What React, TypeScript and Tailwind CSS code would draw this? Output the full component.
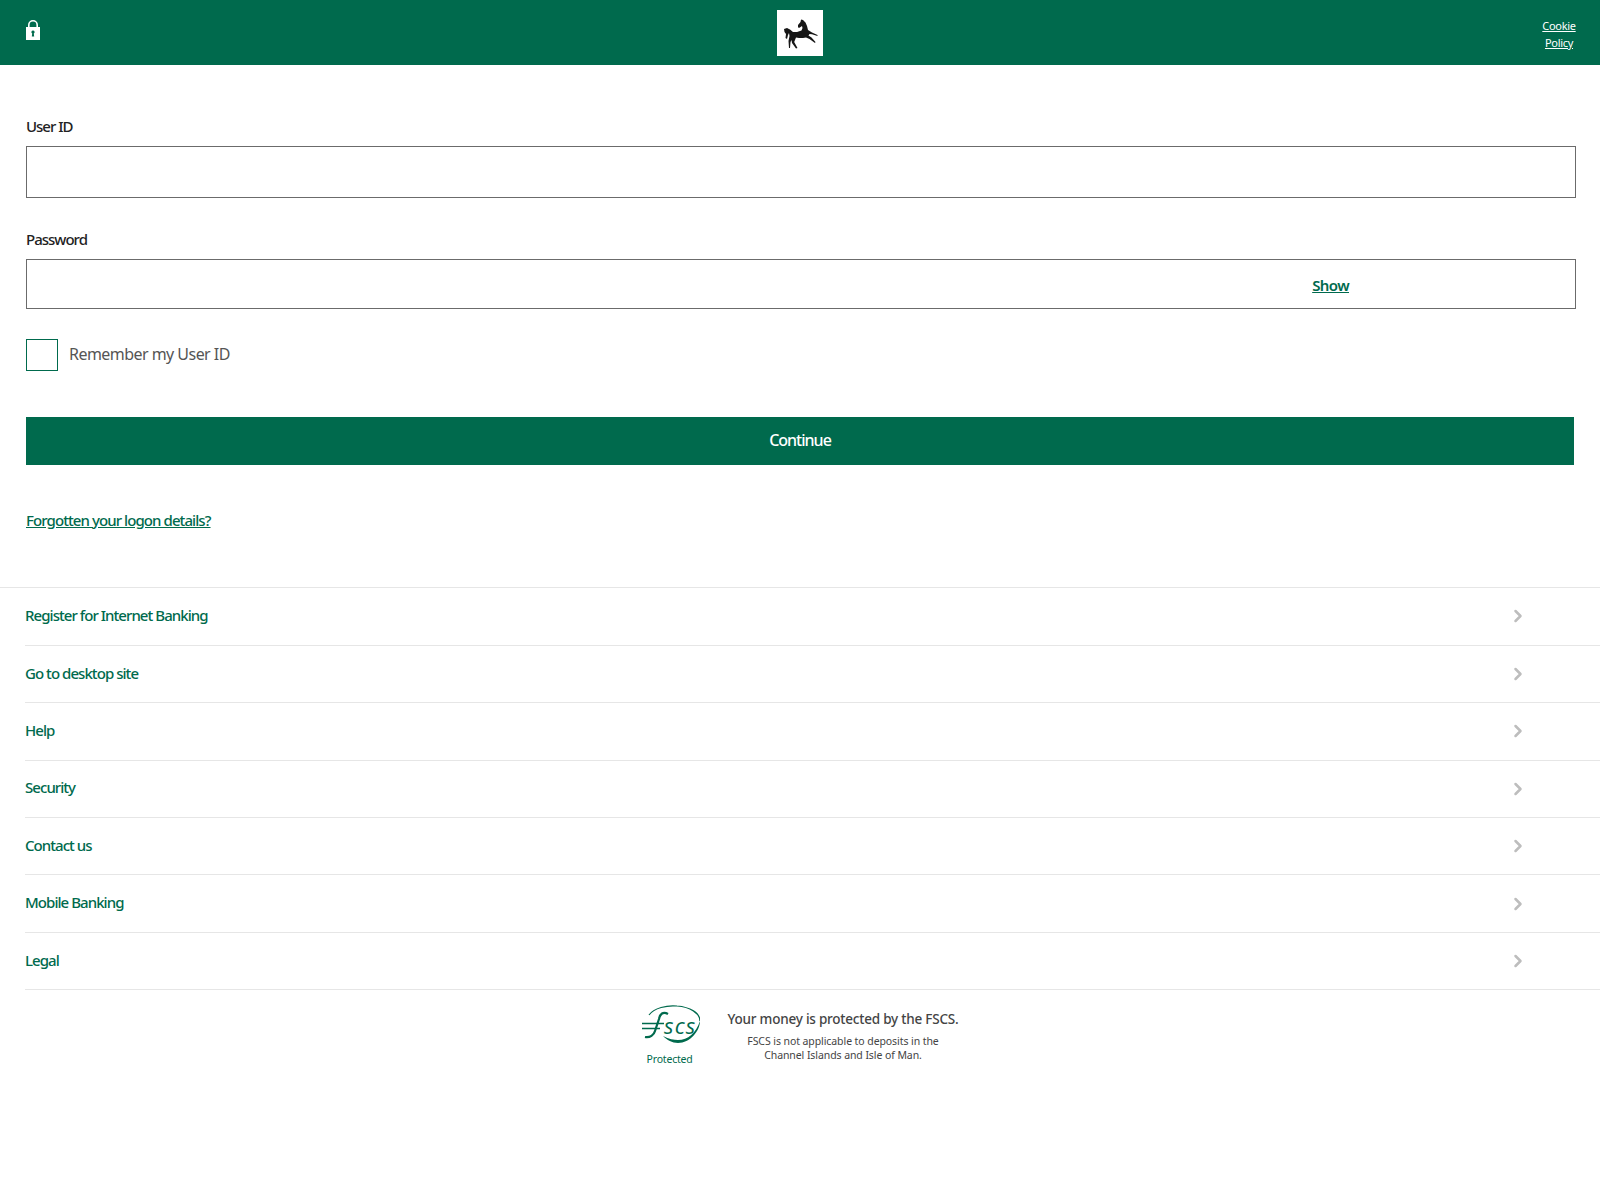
import { ChevronRight } from 'lucide-react'

const links = [
  'Register for Internet Banking',
  'Go to desktop site',
  'Help',
  'Security',
  'Contact us',
  'Mobile Banking',
  'Legal',
]

function Lock() {
  return (
    <svg viewBox="0 0 14 20" className="w-[14px] h-[20px]">
      <path d="M2.800 8V5a4.200 4.200 0 0 1 8.400 0v3" fill="none" stroke="#fff" strokeWidth="1.6" />
      <path fillRule="evenodd" fill="#fff" d="M0 7h14v13H0zM7 10.500a1.600 1.600 0 0 0-.8 3L5.800 16.500h2.400l-.4-3A1.600 1.600 0 0 0 7 10.500z" />
    </svg>
  )
}

function Horse() {
  return (
    <svg viewBox="0 0 36 36" className="w-[36px] h-[36px]">
      <path
        fill="#161616"
        d="M19 4.500L21 5L23.500 7.500L25 11L26 15L30 17.500L35.500 20L35.500 21L30 19.300L27.500 19L26.500 20.500L29.500 22.500L33.500 27L33 28L27.500 24L24 22.500L21 23L17 23L14 22.500L13 25L12.200 27L15.500 33L14 33.500L10 28L9.500 25L8.500 27L8 33L7 33L6.500 26L7.500 21L7 18L6 20L5 24L3.500 23L4 19L2.500 17L2 14L5 13L8 14.500L11 17L15 17L19.500 15.500L20.500 13L20 11L17.500 12.800L16 12.500L16 10L18.500 7z"
      />
    </svg>
  )
}

function FscsLogo() {
  return (
    <svg viewBox="-2 0 60 40" className="w-[60px] h-[40px]">
      <path d="M7 10C12 3 25 0 35 1C48 2 58 8 58 16" fill="none" stroke="#006a4d" strokeWidth="1.2" />
      <path d="M58 16C58 26 48 38 36 38C30 38 25 35 21 31C27 34 32 35 36 35C46 35 54 28 58 16z" fill="#006a4d" />
      <path d="M26 9C21 6 18 9 17 14L13 26C12 30 8 33 3 32" fill="none" stroke="#006a4d" strokeWidth="2.200" />
      <path d="M0 18.500H22M0 23.500H18" stroke="#006a4d" strokeWidth="1.600" />
      <text x="22" y="29" fontSize="22" fontWeight="500" fontStyle="italic" fill="#006a4d" fontFamily="'Open Sans', sans-serif" letterSpacing="1.200">scs</text>
    </svg>
  )
}

export default function App() {
  return (
    <div className="min-h-[1200px] bg-white font-['Noto_Sans',sans-serif] text-[#333]">
      <header className="h-[65px] bg-[#006a4d] flex items-start justify-between pl-[26px] pr-[24px]">
        <div className="w-[58px] pt-[20px]"><Lock /></div>
        <div className="mt-[10px] w-[46px] h-[46px] bg-white flex items-center justify-center"><Horse /></div>
        <a className="w-[60px] pt-[17px] flex flex-col items-end text-[11px] leading-[17px] tracking-[-0.3px] text-white underline text-center">
          <span className="w-[34px] text-center">Cookie Policy</span>
        </a>
      </header>

      <main className="pl-[26px] pr-[24px] pt-[50px]">
        <label className="block text-[15px] leading-[22px] font-medium tracking-[-1px] text-[#222]">User ID</label>
        <div className="mt-[9px] h-[52px] border border-[#6b6b6b]" />
        <label className="block mt-[30px] text-[15px] leading-[22px] font-medium tracking-[-1px] text-[#222]">Password</label>
        <div className="mt-[9px] h-[50px] border border-[#6b6b6b] flex items-center justify-end pr-[226px]">
          <a className="text-[15px] font-semibold tracking-[-0.6px] text-[#006a4d] underline pt-[3px]">Show</a>
        </div>
        <div className="mt-[30px] flex items-center gap-[11px]">
          <div className="w-[32px] h-[32px] border border-[#006a4d]" />
          <span className="text-[16px] leading-[22px] tracking-[-0.54px] text-[#555] pb-[2px]">Remember my User ID</span>
        </div>
        <button className="mt-[46px] w-[1548px] h-[48px] bg-[#006a4d] text-white text-[16px] font-medium tracking-[-1px] block pb-[2px]">Continue</button>
        <a className="inline-block mt-[44px] text-[15px] leading-[22px] font-medium tracking-[-0.92px] text-[#006a4d] underline">Forgotten your logon details?</a>
      </main>

      <nav className="mt-[55.2px] border-t border-[#e6e6e6]">
        {links.map((l) => (
          <div key={l} className="ml-[25px] h-[57.45px] border-b border-[#e6e6e6] flex items-center justify-between pr-[72px]">
            <span className="text-[15px] font-medium tracking-[-0.95px] text-[#006a4d] pb-[2px]">{l}</span>
            <ChevronRight className="w-[20px] h-[20px] text-[#bdbdbd]" strokeWidth={3} />
          </div>
        ))}
      </nav>

      <div className="mt-[15px] flex justify-center items-start gap-[28px] pr-[2px]">
        <div className="flex flex-col items-center w-[60px]">
          <FscsLogo />
          <span className="mt-[7px] text-[10.5px] leading-[14px] tracking-[-0.2px] text-[#006a4d]">Protected</span>
        </div>
        <div className="flex flex-col items-center text-center pt-[4px]">
          <span className="text-[13.5px] leading-[20px] font-medium tracking-[-0.22px] text-[#444]">Your money is protected by the FSCS.</span>
          <span className="mt-[5px] text-[10.5px] leading-[14px] tracking-[-0.08px] text-[#444]">FSCS is not applicable to deposits in the<br />Channel Islands and Isle of Man.</span>
        </div>
      </div>
    </div>
  )
}
